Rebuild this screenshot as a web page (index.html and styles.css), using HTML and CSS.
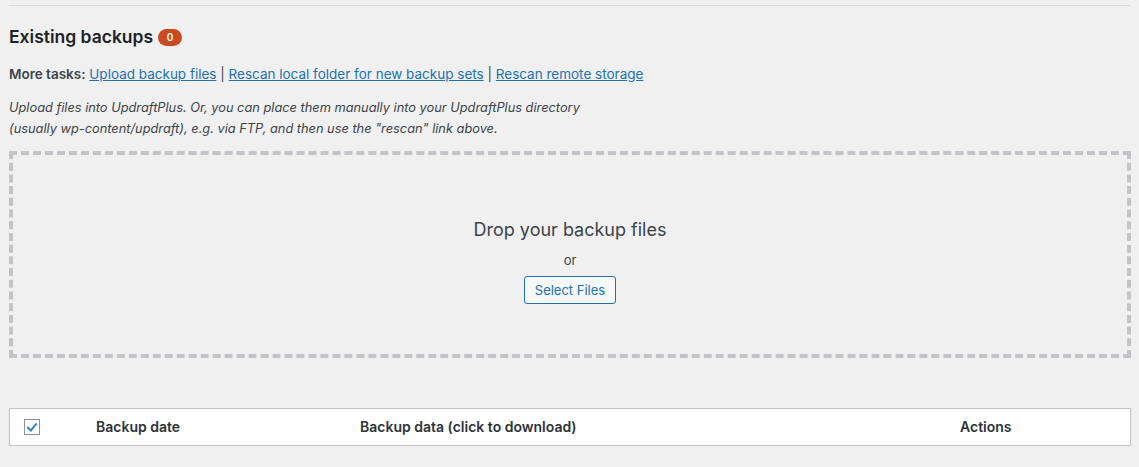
FILE: index.html
```html
<!DOCTYPE html>
<html lang="en">
<head>
    <meta charset="UTF-8">
    <title>UpdraftPlus - Existing backups</title>
    <link rel="stylesheet" href="styles.css">
</head>
<body>
<div class="wrap">
    <hr class="divider">
    <h2 class="section-title">Existing backups <span class="count-badge">0</span></h2>

    <p class="more-tasks">
        <strong>More tasks:</strong>
        <a href="#">Upload backup files</a> |
        <a href="#">Rescan local folder for new backup sets</a> |
        <a href="#">Rescan remote storage</a>
    </p>

    <p class="upload-help">
        Upload files into UpdraftPlus. Or, you can place them manually into your UpdraftPlus directory<br>
        (usually wp-content/updraft), e.g. via FTP, and then use the "rescan" link above.
    </p>

    <div class="drop-area">
        <p class="drop-title">Drop your backup files</p>
        <p class="drop-or">or</p>
        <button class="button" type="button">Select Files</button>
    </div>

    <table class="backup-table">
        <thead>
        <tr>
            <th class="col-check"><span class="checkbox checked"></span></th>
            <th class="col-date">Backup date</th>
            <th class="col-data">Backup data (click to download)</th>
            <th class="col-actions">Actions</th>
        </tr>
        </thead>
    </table>
</div>
</body>
</html>
```

FILE: styles.css
```css
body {
    margin: 0;
    background-color: #f0f0f1;
    color: #3c434a;
    font-family: Inter, 'Liberation Sans', Arial, sans-serif;
    font-size: 13px;
    line-height: 1.4;
}

.wrap {
    margin: 0 8px 0 9px;
    padding-top: 5px;
}

.divider {
    border: none;
    border-top: 1px solid #dcdcde;
    margin: 0 1px 0 0;
}

.section-title {
    margin: 20px 0 0;
    font-size: 17.5px;
    font-weight: 600;
    line-height: 1.2;
    color: #1d2327;
    display: flex;
    align-items: center;
    gap: 5px;
}

.count-badge {
    display: inline-block;
    background-color: #ca4a1f;
    color: #fff;
    font-size: 10px;
    font-weight: 600;
    line-height: 17px;
    height: 17px;
    min-width: 8px;
    padding: 0 8px;
    border-radius: 9px;
    text-align: center;
    margin-top: 2px;
}

.more-tasks {
    margin: 18px 0 0;
    font-size: 13.5px;
}

.more-tasks strong {
    font-weight: 600;
    color: #3c434a;
}

.more-tasks a {
    color: #2271b1;
    text-decoration: underline;
}

.upload-help {
    margin: 13px 0 0;
    font-style: italic;
    font-size: 12.8px;
    line-height: 21px;
}

.drop-area {
    margin-top: 12px;
    height: 199px;
    border: 4px dashed #c3c4c7;
    display: flex;
    flex-direction: column;
    align-items: center;
    justify-content: center;
    text-align: center;
}

.drop-title {
    margin: 14px 0 0;
    font-size: 18px;
    line-height: 24px;
    color: #3c434a;
}

.drop-or {
    margin: 8px 0 6px;
    line-height: 20px;
}

.button {
    font-family: inherit;
    font-size: 13px;
    line-height: 26px;
    min-height: 28px;
    padding: 0 10px;
    color: #2271b1;
    border: 1px solid #2271b1;
    background-color: #f6f7f7;
    border-radius: 3px;
    cursor: pointer;
}

.backup-table {
    margin-top: 50px;
    width: 100%;
    border-collapse: collapse;
    background-color: #fff;
    border: 1px solid #c3c4c7;
    box-shadow: 0 1px 1px rgba(0, 0, 0, 0.08);
}

.backup-table th {
    height: 36px;
    padding: 0 10px;
    font-size: 14px;
    font-weight: 600;
    color: #2c3338;
    text-align: left;
    vertical-align: middle;
}

.backup-table .col-check {
    width: 52px;
    padding-left: 14px;
    padding-right: 0;
}

.backup-table .col-date {
    width: 244px;
    padding-left: 20px;
}

.backup-table .col-actions {
    width: 160px;
    text-align: left;
}

.checkbox {
    display: block;
    width: 14px;
    height: 14px;
    border: 1px solid #8c8f94;
    background-color: #fff;
    position: relative;
}

.checkbox.checked::before {
    content: "";
    position: absolute;
    left: 4px;
    top: 1px;
    width: 4px;
    height: 8px;
    border: solid #3582c4;
    border-width: 0 2.5px 2.5px 0;
    transform: rotate(40deg);
}
```
